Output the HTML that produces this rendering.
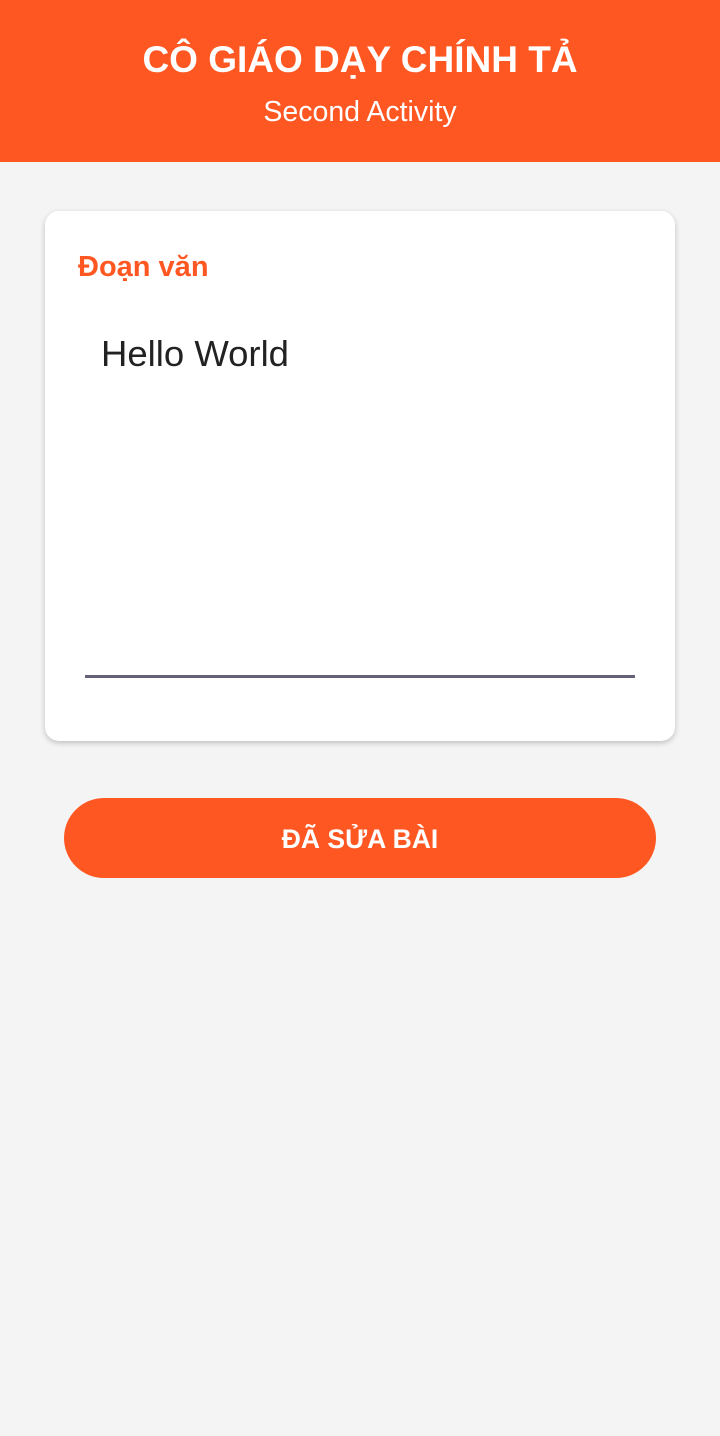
<!DOCTYPE html>
<html><head><meta charset="utf-8"><style>
html,body{margin:0;padding:0;width:720px;height:1436px;background:#f4f4f4;font-family:"Liberation Sans",sans-serif;overflow:hidden}
.hdr{position:absolute;left:0;top:0;width:720px;height:162px;background:#ff5722;color:#fff;text-align:center}
.t1{position:absolute;top:38px;width:100%;font-size:37px;font-weight:bold;line-height:44px}
.t2{position:absolute;top:96px;width:100%;font-size:28.5px;line-height:32px}
.card{position:absolute;left:45px;top:211px;width:630px;height:530px;background:#fff;border-radius:14px;box-shadow:0 2px 6px rgba(0,0,0,.22)}
.lbl{position:absolute;left:33px;top:40px;color:#ff5722;font-size:29px;font-weight:bold}
.txt{position:absolute;left:56px;top:122px;color:#222;font-size:36.5px}
.line{position:absolute;left:40px;top:464px;width:550px;height:3px;background:#66607a}
.btn{position:absolute;left:64px;top:798px;width:592px;height:80px;background:#ff5722;border-radius:40px;color:#fff;font-size:26.5px;font-weight:bold;text-align:center;line-height:82px}
</style></head><body>
<div class="hdr"><div class="t1">CÔ GIÁO DẠY CHÍNH TẢ</div><div class="t2">Second Activity</div></div>
<div class="card"><div class="lbl">Đoạn văn</div><div class="txt">Hello World</div><div class="line"></div></div>
<div class="btn">ĐÃ SỬA BÀI</div>
</body></html>
